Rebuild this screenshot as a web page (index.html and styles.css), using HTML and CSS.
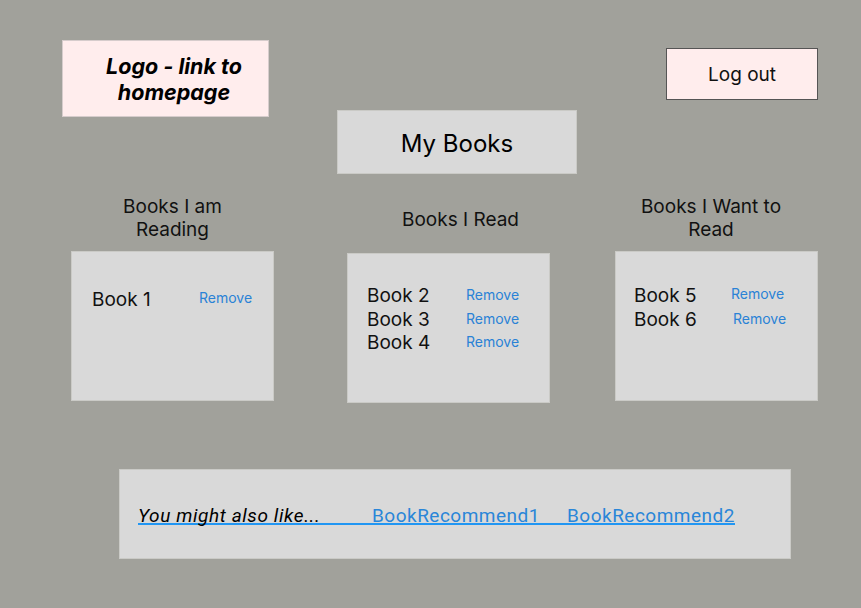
FILE: index.html
```html
<!DOCTYPE html>
<html lang="en">
<head>
<meta charset="utf-8">
<title>My Books</title>
<link rel="stylesheet" href="styles.css">
</head>
<body>
<div class="page">
  <header class="header">
    <a class="logo" href="#">Logo - link to<br>homepage</a>
    <button class="logout" type="button">Log out</button>
  </header>

  <h1 class="title">My Books</h1>

  <section class="columns">
    <div class="col col-reading">
      <h2 class="col-heading">Books I am<br>Reading</h2>
      <div class="box box-reading">
        <ul class="list list-reading">
          <li class="item"><span class="book">Book 1</span><a class="remove" href="#">Remove</a></li>
        </ul>
      </div>
    </div>

    <div class="col col-read">
      <h2 class="col-heading heading-single">Books I Read</h2>
      <div class="box box-read">
        <ul class="list list-read">
          <li class="item"><span class="book">Book 2</span><a class="remove" href="#">Remove</a></li>
          <li class="item"><span class="book">Book 3</span><a class="remove" href="#">Remove</a></li>
          <li class="item"><span class="book">Book 4</span><a class="remove" href="#">Remove</a></li>
        </ul>
      </div>
    </div>

    <div class="col col-want">
      <h2 class="col-heading heading-want">Books I Want to<br>Read</h2>
      <div class="box box-want">
        <ul class="list list-want">
          <li class="item"><span class="book">Book 5</span><a class="remove raise" href="#">Remove</a></li>
          <li class="item"><span class="book">Book 6</span><a class="remove nudge" href="#">Remove</a></li>
        </ul>
      </div>
    </div>
  </section>

  <section class="recommend">
    <div class="recommend-row">
      <span class="also">You might also like...</span>
      <a class="rec rec-1" href="#">BookRecommend1</a>
      <a class="rec rec-2" href="#">BookRecommend2</a>
    </div>
  </section>
</div>
</body>
</html>
```

FILE: styles.css
```css
* {
  box-sizing: border-box;
}

html, body {
  margin: 0;
  padding: 0;
}

body {
  background: #a1a19b;
  font-family: Inter, "Noto Sans", sans-serif;
  color: #000;
  width: 861px;
  height: 608px;
  overflow: hidden;
}

.page {
  padding-top: 40px;
}

.header {
  display: flex;
  justify-content: space-between;
  align-items: flex-start;
  padding: 0 43px 0 62px;
}

.logo {
  display: flex;
  align-items: center;
  justify-content: center;
  width: 207px;
  height: 77px;
  padding-left: 17px;
  background: #ffeded;
  border: 1px solid #d6cccc;
  font-weight: 700;
  font-style: italic;
  font-size: 21.5px;
  line-height: 26px;
  text-align: center;
  color: #000;
  text-decoration: none;
  white-space: nowrap;
}

.logout {
  margin-top: 8px;
  width: 152px;
  height: 52px;
  background: #ffeded;
  border: 1px solid #555;
  font-family: Inter, "Noto Sans", sans-serif;
  font-size: 19px;
  color: #111;
  padding: 0;
}

.title {
  margin: -7px 0 0 337px;
  width: 240px;
  height: 64px;
  display: flex;
  align-items: center;
  justify-content: center;
  padding-top: 2px;
  background: #d9d9d9;
  border: 1px solid #cacac6;
  font-size: 24px;
  font-weight: 400;
}

.columns {
  display: flex;
  align-items: flex-start;
  margin-top: 21px;
}

.col {
  width: 203px;
  display: flex;
  flex-direction: column;
}

.col-reading {
  margin-left: 71px;
}

.col-read {
  margin-left: 73px;
}

.col-want {
  margin-left: 65px;
}

.col-heading {
  margin: 0 0 10px;
  height: 46px;
  font-size: 19px;
  line-height: 23px;
  font-weight: 400;
  text-align: center;
  color: #111;
  white-space: nowrap;
}

.heading-single {
  margin: 13px 0 22px;
  height: 23px;
  padding-left: 24px;
}

.heading-want {
  padding-right: 11px;
}

.box {
  height: 150px;
  background: #d9d9d9;
  border: 1px solid #cacac6;
}

.list {
  list-style: none;
  margin: 0;
  padding: 0;
}

.item {
  display: flex;
  align-items: center;
  height: 23.5px;
}

.book {
  font-size: 19px;
  color: #111;
}

.remove {
  font-size: 14px;
  color: #2a82d6;
  text-decoration: none;
}

.box-reading {
  padding: 36px 0 0 20px;
}

.list-reading .book {
  width: 107px;
}

.list-reading .remove {
  margin-top: -4px;
}

.box-read {
  padding: 30px 0 0 19px;
}

.list-read .book {
  width: 99px;
}

.list-read .remove {
  margin-top: -2px;
}

.box-want {
  padding: 32px 0 0 18px;
}

.list-want .book {
  width: 97px;
}

.raise {
  margin-top: -4px;
}

.nudge {
  margin-left: 2px;
  margin-top: -2px;
}

.recommend {
  margin: 66px 0 0 119px;
  width: 672px;
  height: 90px;
  background: #d9d9d9;
  border: 1px solid #cacac6;
  padding: 36px 0 0 18px;
}

.recommend-row {
  display: inline-flex;
  align-items: flex-start;
  height: 16px;
  line-height: 14px;
  border-bottom: 2px solid #2196f3;
  font-family: Roboto, "Liberation Sans", sans-serif;
  font-size: 19px;
}

.also {
  font-style: italic;
  color: #000;
  letter-spacing: 0.6px;
  width: 234px;
}

.rec {
  color: #2a86d8;
  text-decoration: none;
  letter-spacing: 0.5px;
}

.rec-1 {
  width: 195px;
}
```
